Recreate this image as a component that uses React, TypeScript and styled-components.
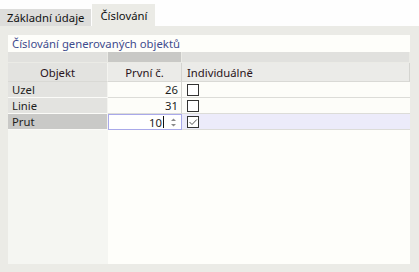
import { Fragment } from "react";
import styled, { createGlobalStyle } from "styled-components";

const GlobalStyle = createGlobalStyle`
  html, body {
    margin: 0;
    padding: 0;
    background: #fefefe;
  }
  body {
    font-family: "Noto Sans", "Open Sans", sans-serif;
    font-size: 11.3px;
    color: #1e1e1e;
  }
`;

const Window = styled.div`
  width: 419px;
  height: 272px;
  display: flex;
  flex-direction: column;
  overflow: hidden;
`;

const TabBar = styled.div`
  height: 26px;
  display: flex;
  align-items: flex-end;
`;

const Tab = styled.div<{ $active?: boolean }>`
  height: ${(p) => (p.$active ? 22 : 17)}px;
  padding: 0 ${(p) => (p.$active ? 8 : 7)}px;
  margin-left: ${(p) => (p.$active ? 1 : 0)}px;
  display: flex;
  align-items: center;
  background: ${(p) => (p.$active ? "#ebebe6" : "#dddddb")};
  color: #111;
  white-space: nowrap;
`;

const Panel = styled.div`
  flex: 1;
  background: #ebebe6;
  padding: 9px 9px 8px 8px;
  display: flex;
  flex-direction: column;
`;

const Title = styled.div`
  height: 17px;
  padding-left: 4px;
  display: flex;
  align-items: center;
  background: #fefefa;
  color: #3e4c8e;
`;

const Grid = styled.div`
  display: grid;
  grid-template-columns: 100px 74px 1fr;
`;

const Strip = styled.div<{ $dark?: boolean }>`
  height: 10px;
  background: ${(p) => (p.$dark ? "#c9c9c6" : "#e1e1de")};
  border-right: 1px solid #ebebe6;
`;

const HeadCell = styled.div<{ $align?: string; $first?: boolean }>`
  height: 18px;
  margin-top: 1px;
  display: flex;
  align-items: center;
  justify-content: ${(p) => p.$align || "flex-start"};
  padding: 0 5px;
  background: ${(p) => (p.$first ? "#e3e3e0" : "#ebebe8")};
  border-right: 1px solid ${(p) => (p.$first ? "#f4f4f0" : "#d4d4d0")};
  border-bottom: 1px solid #d9d9d5;
  color: #2a1420;
`;

const NameCell = styled.div<{ $selected?: boolean }>`
  height: 15px;
  padding: 0 4px;
  display: flex;
  align-items: center;
  background: ${(p) => (p.$selected ? "#c9c9c7" : "#e3e3e0")};
  border-bottom: 1px solid #fbfbf8;
  border-right: 1px solid #f4f4f0;
`;

const NumCell = styled.div`
  height: 15px;
  padding: 0 3px;
  display: flex;
  align-items: center;
  justify-content: flex-end;
  background: #fdfdf9;
  border-bottom: 1px solid #dcdcd8;
  border-right: 1px solid #d4d4d0;
`;

const CheckCell = styled.div<{ $selected?: boolean }>`
  height: 15px;
  padding-left: 5px;
  display: flex;
  align-items: center;
  background: ${(p) => (p.$selected ? "#ecebfa" : "#fdfdf9")};
  border-bottom: 1px solid #dcdcd8;
`;

const SpinInput = styled.div`
  height: 16px;
  box-sizing: border-box;
  display: flex;
  align-items: center;
  justify-content: flex-end;
  background: #ffffff;
  border: 1px solid #a9a9ea;
  padding-right: 4px;
  gap: 6px;
`;

const Caret = styled.span`
  display: inline-block;
  width: 1px;
  height: 12px;
  background: #111;
  margin-left: 1px;
`;

const Value = styled.span`
  display: flex;
  align-items: center;
`;

const Box = styled.div`
  width: 12px;
  height: 12px;
  box-sizing: border-box;
  border: 1px solid #333;
  background: #fff;
  display: flex;
  align-items: center;
  justify-content: center;
`;

const Filler = styled.div`
  flex: 1;
  display: grid;
  grid-template-columns: 100px 1fr;
`;

const FillCol = styled.div<{ $side?: boolean }>`
  background: ${(p) => (p.$side ? "#f5f6f2" : "#fefefa")};
`;

const rows = [
  { name: "Uzel", num: 26, checked: false, editing: false },
  { name: "Linie", num: 31, checked: false, editing: false },
  { name: "Prut", num: 10, checked: true, editing: true },
];

function Check({ checked }: { checked: boolean }) {
  return (
    <Box>
      {checked && (
        <svg width="10" height="10" viewBox="0 0 10 10">
          <path d="M1.5 5 L4 7.5 L8.8 2.5" fill="none" stroke="#555" strokeWidth="1" />
        </svg>
      )}
    </Box>
  );
}

function Spinner() {
  return (
    <svg width="7" height="11" viewBox="0 0 7 11">
      <path d="M3.5 1.5 L6 4 L1 4 Z" fill="#8a8a8a" />
      <path d="M1 7 L6 7 L3.5 9.5 Z" fill="#8a8a8a" />
    </svg>
  );
}

export default function App() {
  return (
    <>
      <GlobalStyle />
      <Window>
        <TabBar>
          <Tab>Základní údaje</Tab>
          <Tab $active>Číslování</Tab>
        </TabBar>
        <Panel>
          <Title>Číslování generovaných objektů</Title>
          <Grid>
            <Strip />
            <Strip $dark />
            <Strip />
            <HeadCell $align="center" $first>Objekt</HeadCell>
            <HeadCell $align="center">První č.</HeadCell>
            <HeadCell>Individuálně</HeadCell>
            {rows.map((r) => (
              <Fragment key={r.name}>
                <NameCell $selected={r.editing}>{r.name}</NameCell>
                {r.editing ? (
                  <SpinInput>
                    <Value>
                      {r.num}
                      <Caret />
                    </Value>
                    <Spinner />
                  </SpinInput>
                ) : (
                  <NumCell>{r.num}</NumCell>
                )}
                <CheckCell $selected={r.editing}>
                  <Check checked={r.checked} />
                </CheckCell>
              </Fragment>
            ))}
          </Grid>
          <Filler>
            <FillCol $side />
            <FillCol />
          </Filler>
        </Panel>
      </Window>
    </>
  );
}
